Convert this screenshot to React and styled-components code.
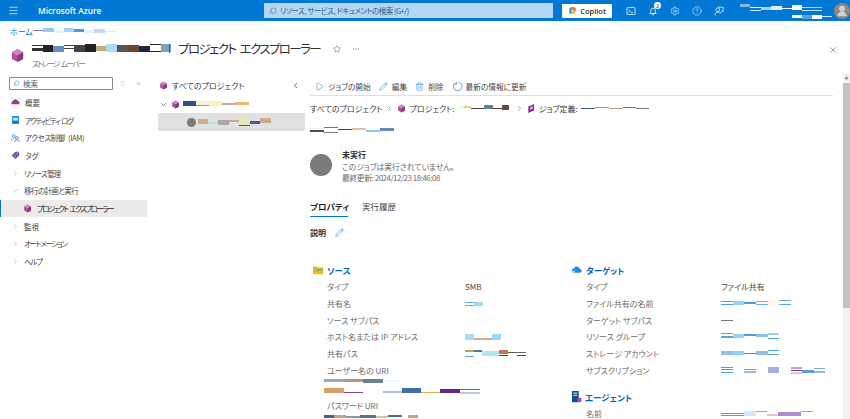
import React from "react";
import styled, { createGlobalStyle } from "styled-components";
import { Play, Pencil, Trash2, Star, X, ChevronRight, ChevronDown, ChevronLeft, Search, ChevronsLeft, ChevronsUpDown, Menu, Settings, CircleHelp, UserRound, Ellipsis } from "lucide-react";

const GlobalStyle = createGlobalStyle`
  html, body {
    margin: 0;
    height: 100%;
    overflow: hidden;
    background: #fff;
  }
  body {
    font-family: "Noto Sans CJK JP", "Noto Sans", sans-serif;
    font-size: 8px;
    font-feature-settings: "palt";
    color: #323130;
  }
  * { box-sizing: border-box; }
`;

const Page = styled.div`
  width: 850px;
  height: 419px;
  display: flex;
  flex-direction: column;
  overflow: hidden;
`;

const TopBar = styled.header`
  flex: none;
  height: 21px;
  background: #0078d4;
  display: flex;
  align-items: center;
  color: #fff;
`;

const MenuButton = styled.div`
  width: 27px;
  padding-left: 8px;
  display: flex;
`;

const Brand = styled.div`
  width: 237px;
  padding-left: 11px;
  font-family: "Open Sans", sans-serif;
  font-size: 8.3px;
  font-weight: 600;
`;

const SearchBox = styled.div`
  width: 289px;
  height: 15px;
  background: #b3d6f2;
  display: flex;
  align-items: center;
  gap: 3px;
  padding-left: 5px;
  color: #2b5f85;
  font-size: 7.5px;
  letter-spacing: -0.5px;
`;

const CopilotButton = styled.div`
  margin-left: 9px;
  width: 50px;
  height: 14px;
  background: #fff;
  border-radius: 1px;
  color: #323130;
  font-family: "Open Sans", sans-serif;
  font-size: 7.5px;
  font-weight: 600;
  display: flex;
  align-items: center;
  justify-content: center;
  gap: 3px;
`;

const TopIcons = styled.div`
  margin-left: 14px;
  display: flex;
  gap: 12px;
  align-items: center;
`;

const TopIcon = styled.div`
  position: relative;
  width: 10px;
  height: 10px;
  display: flex;
`;

const Badge = styled.span`
  position: absolute;
  top: -4px;
  right: -3px;
  width: 7px;
  height: 7px;
  border-radius: 50%;
  background: #fff;
  color: #0078d4;
  font-size: 5px;
  font-weight: 700;
  line-height: 7px;
  text-align: center;
`;

const Account = styled.div`
  margin-left: auto;
  display: flex;
  align-items: center;
  gap: 2px;
`;

const Avatar = styled.div`
  width: 16px;
  height: 16px;
  border-radius: 50%;
  background: #8a8886;
  overflow: hidden;
  display: flex;
  align-items: center;
  justify-content: center;
  color: #d0d0d0;
`;

const PageHeader = styled.div`
  flex: none;
  height: 52px;
  padding: 5px 12px 0 10px;
`;

const Crumbs = styled.div`
  display: flex;
  align-items: center;
  height: 10px;
  color: #0078d4;
  font-size: 8px;
`;

const TitleRow = styled.div`
  margin-top: 4px;
  display: flex;
  align-items: center;
`;

const TitleIconWrap = styled.div`
  width: 22px;
  padding-top: 2px;
  display: flex;
`;

const TitleBlock = styled.div`
  display: flex;
  flex-direction: column;
`;

const TitleLine = styled.div`
  display: flex;
  align-items: center;
  height: 17px;
`;

const Title = styled.h1`
  margin: 0 0 0 7px;
  font-size: 12.5px;
  font-weight: 400;
  letter-spacing: -1.6px;
  word-spacing: 3px;
  color: #323130;
`;

const SubTitle = styled.div`
  margin-top: 2px;
  color: #7a7876;
  font-size: 7.5px;
  line-height: 9px;
  letter-spacing: -1.4px;
  word-spacing: 2px;
`;

const TitleAction = styled.div`
  margin-left: ${(p) => p.$gap}px;
  display: flex;
  color: ${(p) => p.$tone || "#5c5b5a"};
`;

const CloseButton = styled.div`
  margin-left: auto;
  margin-bottom: 9px;
  display: flex;
  color: #4a4948;
`;

const Body = styled.div`
  flex: 1;
  min-height: 0;
  display: flex;
`;

const Sidebar = styled.nav`
  flex: none;
  width: 147px;
  padding-top: 4px;
`;

const SideTools = styled.div`
  display: flex;
  align-items: center;
  padding-left: 9px;
  margin-bottom: 3.5px;
`;

const SideSearch = styled.div`
  width: 104px;
  height: 13px;
  border: 1px solid #8a8886;
  border-radius: 1px;
  display: flex;
  align-items: center;
  gap: 3px;
  padding-left: 3px;
  color: #605e5c;
  font-size: 7.5px;
`;

const SideToolIcon = styled.div`
  margin-left: ${(p) => p.$gap}px;
  display: flex;
  color: #a19f9d;
`;

const SideItem = styled.div`
  height: 17.7px;
  display: flex;
  align-items: center;
  gap: 5px;
  padding-left: ${(p) => (p.$active ? 22 : p.$group ? 12 : 11)}px;
  font-size: 7.5px;
  letter-spacing: ${(p) => p.$ls || 0}px;
  word-spacing: 2px;
  white-space: nowrap;
  color: ${(p) => (p.$active ? "#201f1e" : "#484644")};
  background: ${(p) => (p.$active ? "#edebe9" : "transparent")};
  border-left: ${(p) => (p.$active ? "1px solid #0078d4" : "0 none")};
`;

const IconSlot = styled.span`
  flex: none;
  width: ${(p) => p.$w || 9}px;
  display: flex;
  justify-content: center;
  color: #605e5c;
`;

const Middle = styled.section`
  flex: none;
  width: 147px;
  margin-left: 11px;
  padding-top: 6px;
`;

const MidHead = styled.div`
  height: 12px;
  display: flex;
  align-items: center;
  gap: 4px;
  padding-left: 1px;
  font-size: 8px;
  color: #3b3a39;
`;

const MidBack = styled.span`
  margin-left: auto;
  display: flex;
  padding-right: 5px;
  color: #3b3a39;
`;

const MidNode = styled.div`
  margin-top: 7px;
  height: 12px;
  display: flex;
  align-items: center;
  gap: 3px;
  padding-left: 1px;
`;

const MidSelected = styled.div`
  margin-top: 3px;
  height: 18px;
  background: #e1e1e1;
  display: flex;
  align-items: center;
  gap: 2px;
  padding-left: 29px;
`;

const SmallDot = styled.span`
  width: 9px;
  height: 9px;
  border-radius: 50%;
  background: #7a7a7a;
`;

const Detail = styled.main`
  flex: none;
  width: 523px;
  margin-left: 5px;
  display: flex;
  flex-direction: column;
  min-height: 0;
`;

const Toolbar = styled.div`
  flex: none;
  height: 23px;
  padding: 8px 0 0 5px;
  border-bottom: 1px solid #e1dfdd;
  display: flex;
  align-items: flex-start;
  gap: 8px;
`;

const ToolButton = styled.div`
  display: flex;
  align-items: center;
  height: 10px;
  gap: ${(p) => p.$gap || 4}px;
  font-size: 7.7px;
  color: #484644;
`;

const PathRow = styled.div`
  margin-top: 7px;
  height: 12px;
  display: flex;
  align-items: center;
  font-size: 8px;
  color: #3b3a39;
  gap: 3px;
`;

const PathWrap = styled.div`
  margin-top: 13px;
  height: 7px;
  display: flex;
`;

const Status = styled.div`
  margin-top: 15px;
  display: flex;
  align-items: flex-start;
`;

const StatusDot = styled.div`
  width: 22px;
  height: 22px;
  margin-top: 5px;
  border-radius: 50%;
  background: #7a7a7a;
`;

const StatusText = styled.div`
  margin-left: 10px;
  display: flex;
  flex-direction: column;
`;

const StatusTitle = styled.div`
  font-size: 8px;
  font-weight: 700;
  line-height: 11.5px;
  color: #323130;
`;

const StatusLine = styled.div`
  font-size: 7.8px;
  line-height: 11.5px;
  color: #6b6a68;
  letter-spacing: ${(p) => p.$ls || 0}px;
`;

const Tabs = styled.div`
  margin-top: 16px;
  height: 17.5px;
  display: flex;
  gap: 14px;
`;

const Tab = styled.div`
  height: 17.5px;
  width: ${(p) => p.$w}px;
  font-size: 8.5px;
  line-height: 12px;
  font-weight: ${(p) => (p.$on ? 700 : 400)};
  color: ${(p) => (p.$on ? "#201f1e" : "#484644")};
  border-bottom: ${(p) => (p.$on ? "1.5px solid #0078d4" : "0 none")};
  white-space: nowrap;
`;

const DescRow = styled.div`
  margin-top: 9.5px;
  display: flex;
  align-items: center;
  gap: 9px;
  font-size: 8px;
  font-weight: 700;
  height: 13px;
`;

const Columns = styled.div`
  margin-top: 26px;
  display: grid;
  grid-template-columns: 261px 1fr;
`;

const Section = styled.div`
  margin-bottom: 0;
`;

const SectionHead = styled.div`
  height: 12px;
  display: flex;
  align-items: center;
  gap: 3px;
  color: #0067b8;
  font-size: 8.5px;
  font-weight: 600;
  margin-bottom: 3px;
  margin-left: ${(p) => p.$in || 0}px;
  margin-top: ${(p) => p.$top || 0}px;
`;

const Row = styled.div`
  height: 16.7px;
  display: grid;
  grid-template-columns: ${(p) => p.$label}px 1fr;
  align-items: center;
  padding-left: ${(p) => p.$pad}px;
  font-size: 8px;
  color: #6b6a68;
`;

const Value = styled.div`
  color: #484644;
  display: flex;
  align-items: center;
`;

const Block = styled.div`
  padding-left: 14px;
  margin-bottom: ${(p) => p.$bottom || 0}px;
  display: flex;
`;

const ScrollTrack = styled.div`
  flex: none;
  width: 7px;
  margin-left: 10px;
  background: #f1f1f1;
  display: flex;
  flex-direction: column;
`;

const ScrollArrow = styled.div`
  height: 10px;
  color: #8a8a8a;
  font-size: 4px;
  line-height: 10px;
  text-align: center;
`;

const ScrollThumb = styled.div`
  height: 225px;
  background: #c1c1c1;
`;

// masked text in the screenshot, each segment is [x, y, w, h, colour]
const Smudge = ({ w, h, parts }) => (
  <svg width={w} height={h} viewBox={`0 0 ${w} ${h}`} style={{ flex: "none", display: "block" }} aria-hidden="true">
    {parts.map(([x, y, sw, sh, c], i) => (
      <rect key={i} x={x} y={y} width={sw} height={sh} fill={c} />
    ))}
  </svg>
);

const blueLines = (w) => [
  [0, 1, w * 0.5, 1, "#5aa7e0"],
  [0, 4, w * 0.5, 1, "#5aa7e0"],
  [w * 0.5, 1, w * 0.5, 4, "#9ddcf5"],
];

const Cube = ({ size = 10 }) => (
  <svg width={size} height={size} viewBox="0 0 16 16">
    <path d="M8 1l6 3.400v7.200L8 15l-6-3.400V4.400z" fill="#b0509f" />
    <path d="M8 1l6 3.400L8 8 2 4.400z" fill="#cf86c6" />
    <path d="M8 8l6-3.600v7.200L8 15z" fill="#8a3584" />
  </svg>
);

const Copilot = () => (
  <svg width="9" height="9" viewBox="0 0 16 16">
    <path d="M2 9a6 6 0 0 1 6-7h1L6 8z" fill="#2f8fe8" />
    <path d="M8 2h3a4 4 0 0 1 3 4l-1 3-5-1z" fill="#e8643c" />
    <path d="M14 8a6 6 0 0 1-6 6H6l3-6z" fill="#f2b632" />
    <path d="M2 9l5-1-1 6H5a3 3 0 0 1-3-3z" fill="#46b06a" />
  </svg>
);

const Shell = () => (
  <svg width="10" height="10" viewBox="0 0 16 16" fill="none" stroke="#fff" strokeWidth="1.2">
    <rect x="1.500" y="2.500" width="13" height="11" rx="1" />
    <path d="M4.500 5.500L7 8l-2.500 2.500M8 10.500h3" />
  </svg>
);

const Bell = () => (
  <svg width="10" height="10" viewBox="0 0 16 16" fill="none" stroke="#fff" strokeWidth="1.3">
    <path d="M3 12h10l-1.500-2.500V7a3.500 3.500 0 0 0-7 0v2.500zM6.500 14h3" />
  </svg>
);

const Feedback = () => (
  <svg width="10" height="10" viewBox="0 0 16 16" fill="none" stroke="#fff" strokeWidth="1.2">
    <circle cx="6" cy="6" r="3" />
    <path d="M1.500 15c0-3 2-5 4.500-5s3 1 4 2.500M6 2h8.500v7H12l-2 2" />
  </svg>
);

const Overview = () => (
  <svg width="10" height="10" viewBox="0 0 16 16">
    <path d="M2 12a3 3 0 0 1 1-5.500 5 5 0 0 1 9.500 0A3 3 0 0 1 14 12z" fill="#a3348f" />
    <path d="M1 1h2v1H2v1H1zM13 1h2v2h-1V2h-1zM1 14h2v1H1zM13 14h2v1h-2z" fill="#32bedd" />
  </svg>
);

const ActivityLog = () => (
  <svg width="10" height="10" viewBox="0 0 16 16">
    <rect x="2" y="1" width="12" height="14" rx="1" fill="#1b86d6" />
    <rect x="4" y="4" width="8" height="5" fill="#d8eefb" />
    <rect x="4" y="11" width="8" height="1.500" fill="#0a5fa8" />
  </svg>
);

const Iam = () => (
  <svg width="10" height="10" viewBox="0 0 16 16" fill="none" stroke="#2e86d6" strokeWidth="1.3">
    <circle cx="5" cy="4.500" r="2.500" />
    <path d="M1 13c0-3 1.500-4.500 4-4.500" />
    <circle cx="10.500" cy="8" r="2.500" stroke="#3a6fb0" />
    <path d="M6.500 15c0-2.500 1.500-4 4-4s4 1.500 4 4" stroke="#3a6fb0" />
  </svg>
);

const TagIcon = () => (
  <svg width="10" height="10" viewBox="0 0 16 16">
    <path d="M1 9l7-7 6 0 1 6-7 7z" fill="#6b4fb8" />
    <path d="M3 11l7-7 3 0-7 9z" fill="#8a6fd6" />
    <circle cx="12" cy="4.500" r="1" fill="#fff" />
  </svg>
);

const Refresh = () => (
  <svg width="11" height="11" viewBox="0 0 16 16" fill="none" stroke="#4a9fe0" strokeWidth="1.400">
    <path d="M5 2.800A6.200 6.200 0 1 0 9.500 1.900" />
    <path d="M6.500 1v3.500H3" strokeWidth="1" stroke="#7a7a7a" />
  </svg>
);

const JobDoc = () => (
  <svg width="9" height="11" viewBox="0 0 14 16">
    <path d="M2 5l9-4v10l-9 4z" fill="#8a2f8a" />
    <path d="M5 6l4-2v4l-4 2z" fill="#e6b8e6" />
  </svg>
);

const Folder = () => (
  <svg width="12" height="10" viewBox="0 0 16 14">
    <path d="M1 2h5l1.500 1.500H15V13H1z" fill="#f5b916" />
    <path d="M3 7h12" stroke="#1aa0e0" strokeWidth="1.200" />
    <circle cx="4" cy="7" r="1.500" fill="#e8f7ff" stroke="#1aa0e0" strokeWidth=".7" />
  </svg>
);

const CloudIcon = () => (
  <svg width="12" height="10" viewBox="0 0 16 14">
    <path d="M4 11a3 3 0 0 1-.5-6A4.500 4.500 0 0 1 12 5.500 2.800 2.800 0 0 1 12.500 11z" fill="#1f8ee0" />
    <path d="M1 9h4M2 11h3" stroke="#fff" strokeWidth="1" />
  </svg>
);

const AgentIcon = () => (
  <svg width="11" height="12" viewBox="0 0 14 16">
    <rect x="1" y="0" width="9" height="15" fill="#11518f" />
    <rect x="3" y="2" width="5" height="1.500" fill="#bfe3fa" />
    <rect x="3" y="5" width="5" height="1.500" fill="#bfe3fa" />
    <circle cx="11" cy="12" r="3" fill="#b8449e" />
  </svg>
);

const accountParts = [
  [0, 3, 10, 3, "#7db8e8"], [10, 6, 11, 1, "#fff"], [10, 9, 11, 1, "#d9ecfa"], [21, 6, 10, 3, "#a8d2f2"],
  [31, 5, 11, 4, "#dcecf8"], [42, 7, 10, 1, "#fff"], [52, 4, 10, 5, "#fff"], [62, 6, 20, 1, "#a8d2f2"], [62, 9, 20, 1, "#cfe6f8"],
  [52, 14, 10, 3, "#fff"], [62, 14, 10, 4, "#58a2de"], [72, 14, 10, 4, "#fff"], [82, 15, 10, 1, "#d4e8f8"],
];

const leftRows = [
  ["タイプ", "SMB"],
  ["共有名", <Smudge w={18} h={6} parts={blueLines(18)} />],
  ["ソース サブパス", ""],
  ["ホスト名または IP アドレス", <Smudge w={36} h={6} parts={[[0, 0, 9, 6, "#a5dcfa"], [9, 4, 18, 2, "#d0ab8a"], [27, 0, 9, 6, "#9ad8fa"]]} />],
  ["共有パス", <Smudge w={62} h={7} parts={[[0, 0, 9, 2, "#c79a6c"], [9, 0, 8, 2, "#5a6f98"], [17, 1, 17, 5, "#b0e4fb"], [34, 0, 9, 4, "#c0784a"], [34, 5, 9, 1, "#444"], [43, 2, 9, 1, "#6a5a48"], [52, 2, 9, 1, "#666"], [52, 5, 9, 1, "#444"], [0, 6, 9, 1, "#5aa7e0"]]} />],
];

const rightRows = [
  ["タイプ", "ファイル共有"],
  ["ファイル共有の名前", <Smudge w={70} h={7} parts={[[0, 1, 12, 1, "#4a9fe0"], [0, 4, 12, 1, "#4a9fe0"], [12, 1, 11, 4, "#8cd8f0"], [23, 2, 12, 2, "#4a9fe0"], [35, 1, 12, 1, "#6ab0e4"], [35, 4, 12, 1, "#6ab0e4"], [47, 0, 11, 6, "#fbfbe6"], [58, 0, 12, 1, "#5aa7e0"], [58, 4, 12, 1, "#5aa7e0"]]} />],
  ["ターゲット サブパス", <Smudge w={12} h={3} parts={[[0, 1, 12, 1, "#77777a"]]} />],
  ["リソース グループ", <Smudge w={58} h={7} parts={[[0, 0, 12, 1, "#5aa7e0"], [0, 3, 12, 2, "#5aa7e0"], [12, 1, 11, 4, "#8cd8f0"], [23, 1, 12, 2, "#4a9fe0"], [35, 1, 12, 3, "#8cc0e8"], [47, 0, 11, 2, "#a0d0f4"], [47, 5, 11, 1, "#5aa7e0"]]} />],
  ["ストレージ アカウント", <Smudge w={58} h={7} parts={[[0, 1, 12, 4, "#94bfe8"], [12, 1, 11, 4, "#8cd8f0"], [23, 3, 12, 1, "#2a8ad0"], [35, 1, 12, 4, "#94bfe8"], [47, 0, 11, 1, "#5aa7e0"], [47, 4, 11, 1, "#5aa7e0"]]} />],
  ["サブスクリプション", <Smudge w={105} h={7} parts={[[0, 0, 12, 1, "#4a9fe0"], [0, 2, 12, 1, "#4a9fe0"], [0, 5, 12, 1, "#4a9fe0"], [23, 2, 12, 1, "#5aa7e0"], [23, 4, 12, 2, "#8cbde8"], [47, 0, 11, 6, "#a8aedc"], [70, 0, 11, 2, "#a8aedc"], [70, 3, 11, 1, "#7a3a9a"], [70, 5, 11, 2, "#f4c0d4"], [81, 3, 12, 3, "#5a9fdc"], [93, 1, 11, 1, "#7ab0e0"], [93, 4, 11, 2, "#8cbde8"]]} />],
];

export default function App() {
  return (
    <Page>
      <GlobalStyle />
      <TopBar>
        <MenuButton><Menu size={11} strokeWidth={1.5} /></MenuButton>
        <Brand>Microsoft Azure</Brand>
        <SearchBox>
          <Search size={8} strokeWidth={1.5} style={{ transform: "scaleX(-1)" }} />
          リソース、サービス、ドキュメントの検索 (G+/)
        </SearchBox>
        <CopilotButton><Copilot />Copilot</CopilotButton>
        <TopIcons>
          <TopIcon><Shell /></TopIcon>
          <TopIcon><Bell /><Badge>2</Badge></TopIcon>
          <TopIcon><Settings size={10} strokeWidth={1.3} /></TopIcon>
          <TopIcon><CircleHelp size={10} strokeWidth={1.3} /></TopIcon>
          <TopIcon><Feedback /></TopIcon>
        </TopIcons>
        <Account>
          <Smudge w={92} h={20} parts={accountParts} />
          <Avatar><UserRound size={14} fill="#d0d0d0" strokeWidth={0} /></Avatar>
        </Account>
      </TopBar>

      <PageHeader>
        <Crumbs>
          ホーム
          <Smudge w={85} h={6} parts={[[0, 2, 10, 1, "#77a"], [10, 0, 11, 4, "#9ccbf0"], [21, 2, 10, 3, "#e4f2fb"], [31, 0, 10, 4, "#a8d2f2"], [41, 1, 10, 3, "#4e9ada"], [51, 2, 10, 3, "#e4f2fb"], [61, 1, 11, 4, "#bcdcf4"], [72, 3, 11, 1, "#e8e8e8"]]} />
        </Crumbs>
        <TitleRow>
          <TitleIconWrap><Cube size={15} /></TitleIconWrap>
          <TitleBlock>
            <TitleLine>
              <Smudge w={139} h={9} parts={[[0, 1, 11, 1, "#333"], [0, 4, 11, 3, "#333"], [11, 1, 10, 7, "#222"], [21, 2, 11, 6, "#5f8fc8"], [32, 1, 10, 1, "#444"], [32, 4, 10, 1, "#444"], [42, 1, 11, 7, "#444"], [53, 0, 11, 8, "#222"], [64, 2, 10, 5, "#c9a878"], [74, 0, 11, 8, "#a9dcf2"], [85, 1, 11, 7, "#555"], [96, 1, 11, 7, "#6b4630"], [107, 2, 11, 6, "#1d2744"], [118, 0, 11, 1, "#222"], [118, 7, 11, 1, "#222"], [129, 0, 10, 8, "#7ba2cc"], [137, 0, 1, 9, "#2b5f85"]]} />
              <Title>プロジェクト エクスプローラー</Title>
              <TitleAction $gap={13}><Star size={8} strokeWidth={1.5} /></TitleAction>
              <TitleAction $gap={11} $tone="#a19f9d"><Ellipsis size={8} /></TitleAction>
            </TitleLine>
            <SubTitle>ストレージ ムーバー</SubTitle>
          </TitleBlock>
          <CloseButton><X size={10} strokeWidth={1.2} /></CloseButton>
        </TitleRow>
      </PageHeader>

      <Body>
        <Sidebar>
          <SideTools>
            <SideSearch><Search size={7} strokeWidth={1.5} color="#0078d4" style={{ transform: "scaleX(-1)" }} />検索</SideSearch>
            <SideToolIcon $gap={6}><ChevronsUpDown size={7} /></SideToolIcon>
            <SideToolIcon $gap={9}><ChevronsLeft size={7} /></SideToolIcon>
          </SideTools>
          <SideItem><IconSlot><Overview /></IconSlot>概要</SideItem>
          <SideItem $ls={-1.5}><IconSlot><ActivityLog /></IconSlot>アクティビティ ログ</SideItem>
          <SideItem $ls={-0.4}><IconSlot><Iam /></IconSlot>アクセス制御 (IAM)</SideItem>
          <SideItem><IconSlot><TagIcon /></IconSlot>タグ</SideItem>
          <SideItem $group $ls={-0.8}><IconSlot $w={7}><ChevronRight size={9} strokeWidth={1.2} /></IconSlot>リソース管理</SideItem>
          <SideItem $group $ls={-0.6}><IconSlot $w={7}><ChevronDown size={9} strokeWidth={1.2} /></IconSlot>移行の計画と実行</SideItem>
          <SideItem $active $ls={-1.6}><IconSlot><Cube size={9} /></IconSlot>プロジェクト エクスプローラー</SideItem>
          <SideItem $group><IconSlot $w={7}><ChevronRight size={9} strokeWidth={1.2} /></IconSlot>監視</SideItem>
          <SideItem $group $ls={-1.3}><IconSlot $w={7}><ChevronRight size={9} strokeWidth={1.2} /></IconSlot>オートメーション</SideItem>
          <SideItem $group $ls={-1.2}><IconSlot $w={7}><ChevronRight size={9} strokeWidth={1.2} /></IconSlot>ヘルプ</SideItem>
        </Sidebar>

        <Middle>
          <MidHead>
            <Cube size={9} />
            すべてのプロジェクト
            <MidBack><ChevronLeft size={9} /></MidBack>
          </MidHead>
          <MidNode>
            <ChevronDown size={9} color="#605e5c" />
            <Cube size={9} />
            <Smudge w={66} h={6} parts={[[0, 0, 13, 5, "#2f4f8f"], [13, 0, 13, 4, "#f4f1d8"], [13, 4, 13, 1, "#999"], [26, 0, 13, 5, "#f8f4b8"], [39, 2, 13, 2, "#c9a8a0"], [52, 1, 14, 3, "#f0b878"]]} />
          </MidNode>
          <MidSelected>
            <SmallDot />
            <Smudge w={74} h={8} parts={[[0, 1, 10, 5, "#d0ab8a"], [10, 4, 10, 2, "#b4e4da"], [20, 2, 11, 5, "#a8a8a8"], [31, 2, 10, 2, "#c8b078"], [41, 0, 11, 7, "#e8e8b8"], [41, 7, 11, 1, "#555"], [52, 3, 10, 3, "#3f5f8f"], [62, 0, 11, 5, "#d0ab8a"]]} />
          </MidSelected>
        </Middle>

        <Detail>
          <Toolbar>
            <ToolButton><Play size={9} strokeWidth={1.3} color="#0078d4" />ジョブの開始</ToolButton>
            <ToolButton><Pencil size={9} strokeWidth={1.3} color="#0078d4" />編集</ToolButton>
            <ToolButton><Trash2 size={9} strokeWidth={1.3} color="#0078d4" />削除</ToolButton>
            <ToolButton $gap={3}><Refresh />最新の情報に更新</ToolButton>
          </Toolbar>
          <PathRow>
            すべてのプロジェクト
            <ChevronRight size={9} strokeWidth={1.2} />
            <Cube size={9} />
            プロジェクト:
            <Smudge w={52} h={7} parts={[[0, 0, 8, 4, "#e4fbf4"], [6, 1, 7, 2, "#f0d088"], [13, 3, 13, 1, "#444"], [26, 0, 9, 4, "#5f7f9f"], [35, 3, 12, 1, "#444"], [44, 0, 7, 5, "#6b4640"]]} />
            <ChevronRight size={9} strokeWidth={1.2} style={{ marginLeft: 2 }} />
            <JobDoc />
            ジョブ定義:
            <Smudge w={68} h={3} parts={[[0, 1, 14, 1, "#3f5f6f"], [14, 0, 14, 1, "#d89048"], [28, 1, 14, 1, "#b09a80"], [42, 0, 13, 1, "#5a7a8a"], [55, 1, 13, 1, "#77777a"]]} />
          </PathRow>
          <PathWrap>
            <Smudge w={84} h={7} parts={[[0, 1, 14, 1, "#e4fbf4"], [0, 3, 14, 2, "#5a4838"], [14, 0, 14, 1, "#777"], [14, 5, 14, 1, "#777"], [28, 2, 14, 1, "#444"], [42, 1, 14, 2, "#e8c0a0"], [56, 3, 14, 2, "#88c8f4"], [70, 1, 14, 3, "#5f8fbf"]]} />
          </PathWrap>
          <Status>
            <StatusDot />
            <StatusText>
              <StatusTitle>未実行</StatusTitle>
              <StatusLine>このジョブは実行されていません。</StatusLine>
              <StatusLine $ls={-0.4}>最終更新: 2024/12/23 18:46:08</StatusLine>
            </StatusText>
          </Status>
          <Tabs>
            <Tab $on $w={38}>プロパティ</Tab>
            <Tab $w={36}>実行履歴</Tab>
          </Tabs>
          <DescRow>説明<Pencil size={9} strokeWidth={1.4} color="#0078d4" /></DescRow>
          <Columns>
            <Section>
              <SectionHead $in={2}><Folder />ソース</SectionHead>
              {leftRows.map(([label, value]) => (
                <Row key={label} $label={138} $pad={17}>
                  <span>{label}</span>
                  <Value>{value}</Value>
                </Row>
              ))}
              <Row $label={138} $pad={17}><span>ユーザー名の URI</span><Value /></Row>
              <Block $bottom={3}>
                <Smudge w={156} h={16} parts={[[0, 0, 20, 3, "#9aa8b4"], [20, 0, 19, 3, "#b09880"], [39, 0, 20, 4, "#6f7f94"], [59, 1, 19, 1, "#e4fbf4"], [0, 9, 20, 5, "#d8a068"], [20, 13, 19, 1, "#884488"], [59, 12, 20, 2, "#b0c0d0"], [78, 9, 19, 5, "#3f6fa8"], [97, 13, 19, 1, "#e8b040"], [116, 10, 20, 4, "#602880"], [136, 10, 20, 1, "#5a6f98"], [136, 13, 20, 2, "#b8c8d8"]]} />
              </Block>
              <Row $label={138} $pad={17}><span>パスワード URI</span><Value /></Row>
              <Block>
                <Smudge w={96} h={5} parts={[[0, 1, 10, 3, "#3f5f8f"], [10, 1, 12, 3, "#d8a068"], [22, 2, 14, 2, "#8899aa"], [36, 1, 16, 3, "#5a6f98"], [52, 2, 12, 2, "#e8c088"], [64, 1, 14, 2, "#3f6fa8"], [84, 1, 10, 3, "#d8a068"]]} />
              </Block>
            </Section>
            <Section>
              <SectionHead><CloudIcon />ターゲット</SectionHead>
              {rightRows.map(([label, value]) => (
                <Row key={label} $label={135} $pad={15}>
                  <span>{label}</span>
                  <Value>{value}</Value>
                </Row>
              ))}
              <SectionHead $top={12}><AgentIcon />エージェント</SectionHead>
              <Row $label={135} $pad={15}>
                <span>名前</span>
                <Value><Smudge w={92} h={6} parts={[[0, 2, 23, 1, "#4a9fe0"], [0, 4, 23, 1, "#4a9fe0"], [23, 0, 12, 5, "#d0e8f8"], [35, 0, 11, 1, "#7ab0e0"], [46, 3, 11, 2, "#f4c0d4"], [57, 1, 23, 4, "#a88ecc"], [80, 0, 12, 1, "#7ab0e0"]]} /></Value>
              </Row>
            </Section>
          </Columns>
        </Detail>

        <ScrollTrack>
          <ScrollArrow>▲</ScrollArrow>
          <ScrollThumb />
        </ScrollTrack>
      </Body>
    </Page>
  );
}
